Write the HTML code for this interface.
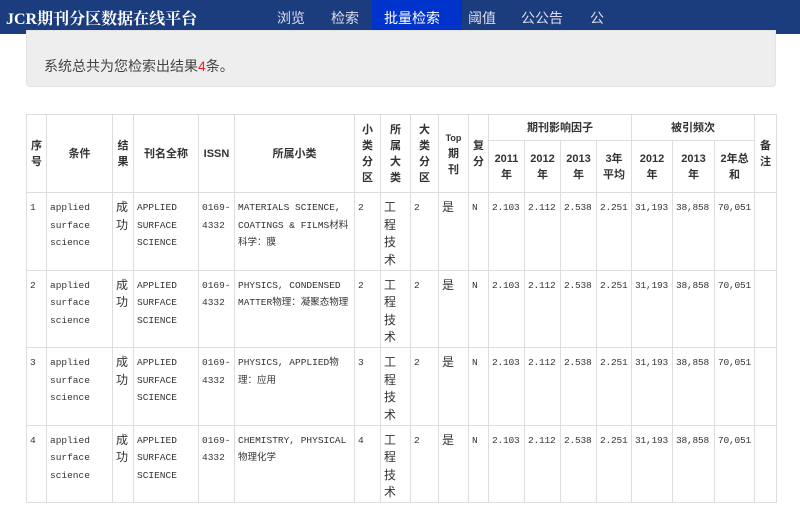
<!DOCTYPE html>
<html><head><meta charset="utf-8"><style>
*{margin:0;padding:0;box-sizing:border-box}
body{width:800px;height:514px;background:#fff;font-family:"Liberation Mono","Noto Sans CJK SC",monospace;color:#333;overflow:hidden;position:relative}
.nav{position:absolute;left:0;top:0;width:800px;height:34px;background:#1c3d7d}
.brand{position:absolute;left:6px;top:6px;font:bold 16px "Liberation Serif","Noto Serif CJK SC",serif;color:#fff}
.nav span{position:absolute;top:8px;font:14px "Liberation Sans","Noto Sans CJK SC",sans-serif;color:#dde}
.act{position:absolute;left:372px;top:0;width:90px;height:34px;background:#0033cc}
.well{position:absolute;left:26px;top:30px;width:750px;height:57px;background:#eee;border-radius:0 0 4px 4px;border:1px solid #e3e3e3}
.well p{position:absolute;left:17px;top:25px;font:14px "Liberation Sans","Noto Sans CJK SC",sans-serif;color:#444}
table{position:absolute;left:26px;top:114px;border-collapse:collapse;table-layout:fixed;width:750px;border:1px solid #ddd}
td,th{border:1px solid #ddd;font-size:9.5px;vertical-align:top;padding:6px 3px 0 3px;line-height:17.5px;word-wrap:break-word;overflow:hidden}
td.n{white-space:nowrap;padding:6px 2px 0 3px;letter-spacing:-0.2px}
th{font-family:"Liberation Sans","Noto Sans CJK SC",sans-serif;font-weight:bold;text-align:center;vertical-align:middle;font-size:11px;line-height:16px;padding:2px 1px}
td.c{font-family:"Liberation Sans","Noto Sans CJK SC",sans-serif;font-size:12px}
tr.b td{height:77.5px}
</style></head><body>
<div class="nav"><div class="brand">JCR期刊分区数据在线平台</div>
<div class="act"></div>
<span style="left:277px">浏览</span><span style="left:331px">检索</span><span style="left:384px;color:#fff">批量检索</span><span style="left:468px">阈值</span><span style="left:521px">公公告</span><span style="left:590px">公</span></div>
<div class="well"><p>系统总共为您检索出结果<span style="color:#e22">4</span>条。</p></div>
<table>
<colgroup><col style="width:20px"><col style="width:66px"><col style="width:21px"><col style="width:65px"><col style="width:36px"><col style="width:120px"><col style="width:26px"><col style="width:30px"><col style="width:28px"><col style="width:30px"><col style="width:20px"><col style="width:36px"><col style="width:36px"><col style="width:36px"><col style="width:35px"><col style="width:41px"><col style="width:42px"><col style="width:40px"><col style="width:22px"></colgroup>
<tr style="height:26px"><th rowspan="2">序<br>号</th><th rowspan="2">条件</th><th rowspan="2">结<br>果</th><th rowspan="2">刊名全称</th><th rowspan="2">ISSN</th><th rowspan="2">所属小类</th><th rowspan="2">小<br>类<br>分<br>区</th><th rowspan="2">所<br>属<br>大<br>类</th><th rowspan="2">大<br>类<br>分<br>区</th><th rowspan="2" style="font-size:9px">Top<br><span style="font-size:11px">期<br>刊</span></th><th rowspan="2">复<br>分</th><th colspan="4">期刊影响因子</th><th colspan="3">被引频次</th><th rowspan="2">备<br>注</th></tr>
<tr style="height:52px"><th>2011<br>年</th><th>2012<br>年</th><th>2013<br>年</th><th>3年<br>平均</th><th>2012<br>年</th><th>2013<br>年</th><th>2年总<br>和</th></tr>
<tr class="b"><td>1</td><td>applied surface science</td><td class="c">成功</td><td>APPLIED SURFACE SCIENCE</td><td>0169-4332</td><td>MATERIALS SCIENCE, COATINGS &amp; FILMS材料科学：膜</td><td>2</td><td class="c">工程技术</td><td>2</td><td class="c">是</td><td>N</td><td class="n">2.103</td><td class="n">2.112</td><td class="n">2.538</td><td class="n">2.251</td><td class="n">31,193</td><td class="n">38,858</td><td class="n">70,051</td><td></td></tr>
<tr class="b"><td>2</td><td>applied surface science</td><td class="c">成功</td><td>APPLIED SURFACE SCIENCE</td><td>0169-4332</td><td>PHYSICS, CONDENSED MATTER物理：凝聚态物理</td><td>2</td><td class="c">工程技术</td><td>2</td><td class="c">是</td><td>N</td><td class="n">2.103</td><td class="n">2.112</td><td class="n">2.538</td><td class="n">2.251</td><td class="n">31,193</td><td class="n">38,858</td><td class="n">70,051</td><td></td></tr>
<tr class="b"><td>3</td><td>applied surface science</td><td class="c">成功</td><td>APPLIED SURFACE SCIENCE</td><td>0169-4332</td><td>PHYSICS, APPLIED物理：应用</td><td>3</td><td class="c">工程技术</td><td>2</td><td class="c">是</td><td>N</td><td class="n">2.103</td><td class="n">2.112</td><td class="n">2.538</td><td class="n">2.251</td><td class="n">31,193</td><td class="n">38,858</td><td class="n">70,051</td><td></td></tr>
<tr class="b"><td>4</td><td>applied surface science</td><td class="c">成功</td><td>APPLIED SURFACE SCIENCE</td><td>0169-4332</td><td>CHEMISTRY, PHYSICAL物理化学</td><td>4</td><td class="c">工程技术</td><td>2</td><td class="c">是</td><td>N</td><td class="n">2.103</td><td class="n">2.112</td><td class="n">2.538</td><td class="n">2.251</td><td class="n">31,193</td><td class="n">38,858</td><td class="n">70,051</td><td></td></tr>
</table>
</body></html>
